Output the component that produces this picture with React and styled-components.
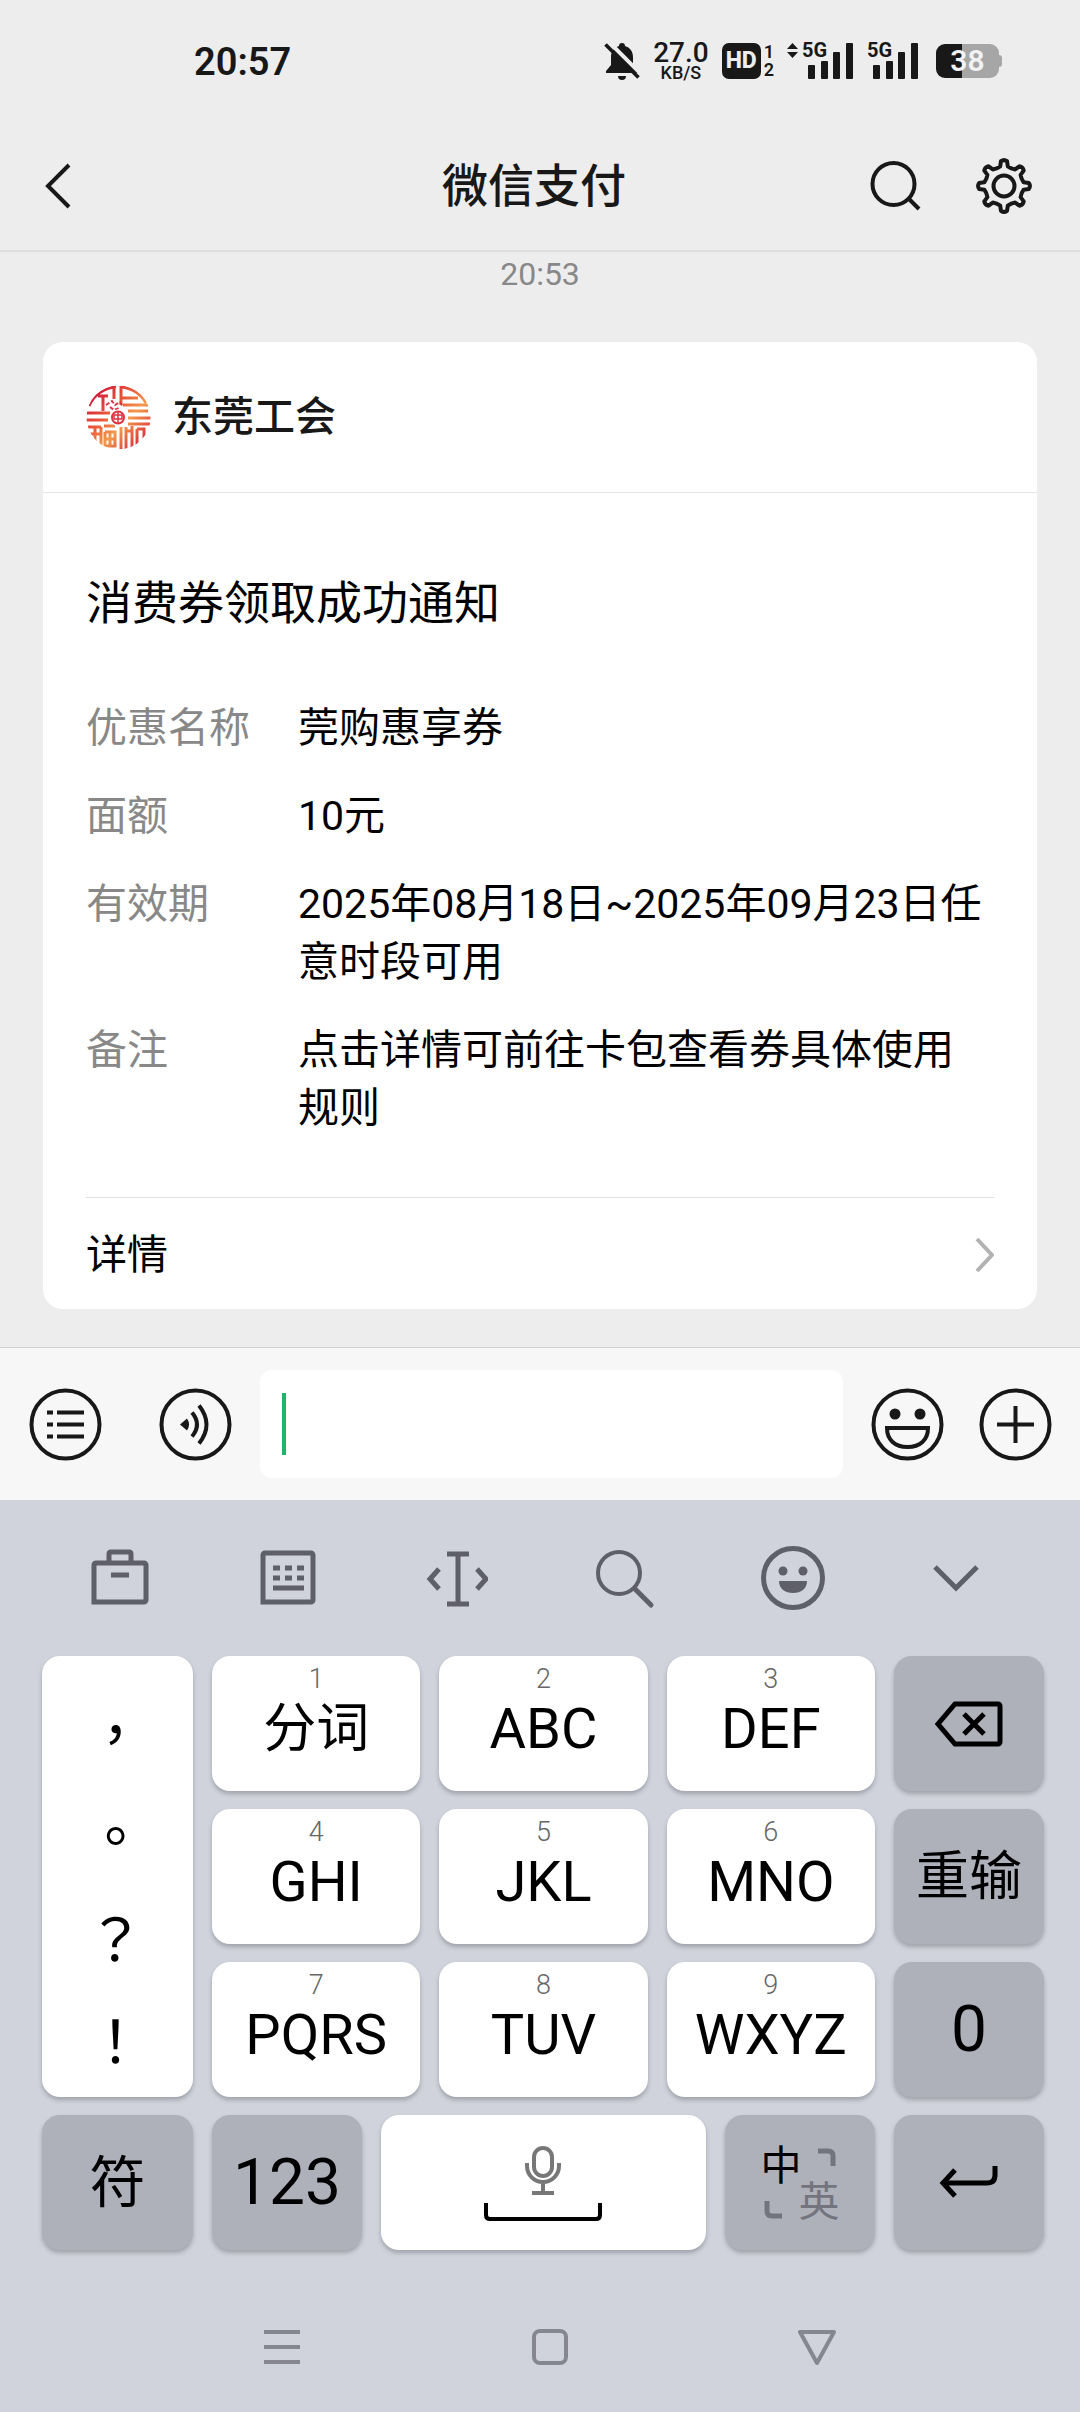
import React from "react";
import styled, { createGlobalStyle } from "styled-components";

const GlobalStyle = createGlobalStyle`
  *, *::before, *::after { box-sizing: border-box; }
  body {
    margin: 0;
    background: #d0d3db;
    color: #000;
    font-family: Roboto, "Noto Sans CJK SC", sans-serif;
  }
  button, input { font: inherit; color: inherit; }
  svg { display: block; flex: none; }
`;

const Page = styled.div`
  display: flex;
  flex-direction: column;
`;

const PlainButton = styled.button`
  display: flex;
  align-items: center;
  justify-content: center;
  padding: 0;
  border: 0;
  background: none;
`;

/* ---------- status bar ---------- */

const StatusBar = styled.div`
  display: flex;
  align-items: center;
  justify-content: space-between;
  height: 122px;
  padding: 0 78px 0 194px;
  background: #ededed;
  color: #181818;
`;

const Clock = styled.time`
  padding-top: 2px;
  font-size: 38px;
  font-weight: 600;
  line-height: 40px;
`;

const StatusIcons = styled.div`
  display: flex;
  align-items: center;
  gap: 13px;
`;

const NetSpeed = styled.div`
  display: flex;
  flex-direction: column;
  align-items: center;
  font-weight: 500;
  font-size: 28px;
  line-height: 24px;
`;

const SpeedUnit = styled.span`
  font-size: 18px;
  line-height: 16px;
`;

const HdGroup = styled.div`
  display: flex;
  align-items: center;
  gap: 3px;
`;

const HdBadge = styled.span`
  width: 39px;
  border-radius: 7px;
  background: #181818;
  color: #ededed;
  font-size: 23px;
  font-weight: 800;
  line-height: 36px;
  text-align: center;
`;

const SimNumbers = styled.span`
  display: flex;
  flex-direction: column;
  font-size: 18px;
  font-weight: 600;
  line-height: 18px;
`;

const Battery = styled.div`
  display: flex;
  align-items: center;
  margin-left: 4px;
`;

const BatteryBody = styled.span`
  width: 63px;
  border-radius: 9px;
  background: linear-gradient(90deg, #181818 42%, #a6a6a6 42%);
  color: #f2f2f2;
  font-size: 30px;
  font-weight: 600;
  line-height: 34px;
  text-align: center;
`;

const BatteryCap = styled.span`
  width: 3px;
  height: 12px;
  border-radius: 0 3px 3px 0;
  background: #a6a6a6;
`;

/* ---------- title bar ---------- */

const Header = styled.header`
  display: grid;
  grid-template-columns: 1fr auto 1fr;
  align-items: center;
  height: 130px;
  padding: 0 48px 0 36px;
  border-bottom: 2px solid #dedede;
  background: #ededed;
  color: #181818;
`;

const BackButton = styled(PlainButton)`
  justify-self: start;
`;

const HeaderTitle = styled.h1`
  margin: 0;
  font-size: 46px;
  font-weight: 500;
  line-height: 60px;
`;

const HeaderActions = styled.div`
  display: flex;
  justify-content: flex-end;
  gap: 52px;
`;

/* ---------- conversation ---------- */

const Chat = styled.main`
  display: flex;
  flex-direction: column;
  padding: 0 43px 38px;
  background: #ededed;
`;

const Stamp = styled.time`
  align-self: center;
  margin-bottom: 46px;
  color: #888;
  font-size: 32px;
  line-height: 44px;
`;

const Card = styled.article`
  border-radius: 20px;
  background: #fff;
`;

const CardHeader = styled.div`
  display: flex;
  align-items: center;
  gap: 21px;
  height: 151px;
  padding: 0 43px;
  border-bottom: 1px solid #e5e5e5;
  color: #181818;
  font-size: 41px;
  font-weight: 500;
  line-height: 58px;
`;

const CardBody = styled.div`
  padding: 80px 43px 60px;
`;

const CardTitle = styled.h2`
  margin: 0 0 66px;
  font-size: 46px;
  font-weight: 400;
  line-height: 60px;
`;

const Details = styled.dl`
  display: grid;
  grid-template-columns: 180px 1fr;
  column-gap: 32px;
  row-gap: 30px;
  margin: 0;
  font-size: 41px;
  line-height: 58px;
`;

const Term = styled.dt`
  color: #888;
`;

const Value = styled.dd`
  margin: 0;
`;

const CardLink = styled.a`
  display: flex;
  align-items: center;
  justify-content: space-between;
  height: 112px;
  margin: 0 43px;
  padding-top: 2px;
  border-top: 1px solid #e0e0e0;
  color: #000;
  font-size: 41px;
  line-height: 58px;
  text-decoration: none;
`;

/* ---------- message composer ---------- */

const Composer = styled.form`
  display: flex;
  align-items: center;
  gap: 28px;
  padding: 22px 28px 22px 29px;
  border-top: 1px solid #d2d2d2;
  background: #f7f7f7;
  color: #181818;
`;

const ComposerGroup = styled.div`
  display: flex;
  gap: ${(p) => p.$gap}px;
`;

const Field = styled.label`
  display: flex;
  flex: 1;
  align-items: center;
  min-width: 0;
  height: 108px;
  padding: 0 22px;
  border-radius: 12px;
  background: #fff;
`;

const Caret = styled.span`
  width: 4px;
  height: 62px;
  background: #1fb66b;
`;

const FieldInput = styled.input`
  flex: 1;
  min-width: 0;
  padding: 0 8px;
  border: 0;
  outline: 0;
  background: none;
  font-size: 46px;
`;

/* ---------- keyboard ---------- */

const Keyboard = styled.section`
  display: flex;
  flex-direction: column;
  background: #d0d3db;
`;

const Tools = styled.div`
  display: grid;
  grid-template-columns: repeat(6, 1fr);
  height: 156px;
  padding: 0 36px;
  color: #5e5f68;
`;

const Keys = styled.div`
  display: grid;
  grid-template-columns: 151px 1fr 1fr 1fr 150px;
  grid-auto-rows: 135px;
  gap: 18px 19px;
  padding: 0 36px 0 42px;
`;

const BottomKeys = styled.div`
  display: grid;
  grid-column: 1 / -1;
  grid-template-columns: 151px 150px 1fr 150px 150px;
  gap: 19px;
`;

const Key = styled(PlainButton)`
  flex-direction: column;
  border-radius: 18px;
  background: ${(p) => (p.$dark ? "#aeb0ba" : "#fff")};
  box-shadow: 0 3px 4px rgba(60, 62, 72, 0.32);
  font-size: ${(p) => p.$size || 56}px;
  line-height: 64px;
`;

const LetterKey = styled(Key)`
  justify-content: flex-start;
  padding-top: 7px;
  line-height: 68px;
`;

const Digit = styled.span`
  color: #666;
  font-size: 27px;
  font-weight: 300;
  line-height: 32px;
`;

const PunctuationPad = styled.div`
  display: grid;
  grid-row: span 3;
  grid-auto-rows: 1fr;
  padding: 24px 4px 8px 0;
  border-radius: 18px;
  background: #fff;
  box-shadow: 0 3px 4px rgba(60, 62, 72, 0.32);
`;

const PunctuationKey = styled(PlainButton)`
  font-family: "Noto Sans CJK TC", sans-serif;
  font-size: 58px;
  line-height: 64px;
`;

const LanguageGrid = styled.span`
  display: grid;
  grid-template-columns: 38px 38px;
  grid-template-rows: 38px 38px;
  place-items: center;
  font-size: 41px;
  line-height: 38px;
`;

const LanguageName = styled.span`
  padding-top: ${(p) => (p.$muted ? 0 : 4)}px;
  color: ${(p) => (p.$muted ? "#73747e" : "#000")};
`;

const SystemNav = styled.nav`
  display: grid;
  grid-template-columns: repeat(3, 1fr);
  height: 131px;
  margin-top: 31px;
  padding: 0 128px 0 148px;
  color: #85868f;
`;

/* ---------- drawings ---------- */

const Line = ({ w, h, sw = 4, children, ...rest }) => (
  <svg
    width={w}
    height={h}
    viewBox={`0 0 ${w} ${h}`}
    fill="none"
    stroke="currentColor"
    strokeWidth={sw}
    aria-hidden="true"
    {...rest}
  >
    {children}
  </svg>
);

const BellOff = () => (
  <svg width="36" height="38" viewBox="0 0 36 38" aria-hidden="true">
    <path
      fill="#181818"
      d="M18 1a3 3 0 0 1 3 3C26 5.500 29 9.500 29 15v8l5 6v2H2v-2l5-6v-8C7 9.500 10 5.500 15 4a3 3 0 0 1 3-3zM14 34h8a4 4 0 0 1-8 0z"
    />
    <path d="M4 -1L38 33" stroke="#ededed" strokeWidth="4" />
    <path d="M1.500 2.500L34.500 35.500" stroke="#181818" strokeWidth="3.500" />
  </svg>
);

const Signal = ({ arrows }) => (
  <svg
    width={arrows ? 67 : 52}
    height="54"
    viewBox={arrows ? "-15 -8 67 54" : "0 -8 52 54"}
    fill="#181818"
    aria-hidden="true"
  >
    {arrows && <path d="M-15 7l5.500-6L-4 7zM-15 10h11l-5.500 6z" />}
    <text x="0" y="15" fontSize="20" fontWeight="700">5G</text>
    <rect x="6" y="23" width="7" height="14" rx="1" />
    <rect x="19" y="19" width="7" height="18" rx="1" />
    <rect x="31" y="10" width="7" height="27" rx="1" />
    <rect x="44" y="1" width="7" height="36" rx="1" />
  </svg>
);

const gearPath = (() => {
  const at = (deg, r) => {
    const t = (deg * Math.PI) / 180;
    return `${(28 + r * Math.sin(t)).toFixed(2)} ${(28 - r * Math.cos(t)).toFixed(2)}`;
  };
  let d = "";
  for (let i = 0; i < 8; i += 1) {
    const a = i * 45;
    d += `${i ? "L" : "M"}${at(a - 11, 20)}L${at(a - 7, 25)}Q${at(a, 27)} ${at(a + 7, 25)}L${at(a + 11, 20)}Q${at(a + 22.5, 18.5)} ${at(a + 34, 20)}`;
  }
  return `${d}Z`;
})();

const Gear = () => (
  <Line w={56} h={56} strokeLinejoin="round">
    <path d={gearPath} />
    <circle cx="28" cy="28" r="10.500" />
  </Line>
);

const Avatar = () => (
  <svg width="65" height="65" viewBox="0 0 65 65" fill="none" aria-hidden="true">
    <defs>
      <linearGradient id="seal" gradientUnits="userSpaceOnUse" x1="6" y1="6" x2="60" y2="60">
        <stop offset="0" stopColor="#d00f3a" />
        <stop offset="0.35" stopColor="#e8573a" />
        <stop offset="0.6" stopColor="#f29a4c" />
        <stop offset="1" stopColor="#d8173a" />
      </linearGradient>
      <clipPath id="disc"><circle cx="32.500" cy="32.500" r="32" /></clipPath>
    </defs>
    <g stroke="url(#seal)" strokeWidth="3" clipPath="url(#disc)">
      <path d="M3 21A31 31 0 0 1 30 2M12 11h10M17 10V26M28 2V14" />
      <path d="M35 2A31 31 0 0 1 60 18M35 1V20M35 13H52M37 20H62M42 26H62" />
      <path d="M0 28H24M0 35H22M42 33H65M42 39H65" />
      <path d="M2 42H15M9 42V56M3 49H15M15 42V60" />
      <path d="M18 41H29M19 47H29V61H19V47M19 54H29M24 47V61" />
      <path d="M35 42V64M40 42V64M46 41V62M40 46H46M51 44V60M51 44H58V54" />
    </g>
    <g stroke="#de3442" strokeWidth="2">
      <path d="M20 20l6-4 3 4 5-3 3 5M24 22l4 3 5-2" strokeDasharray="4 2" />
      <circle cx="32" cy="32.500" r="8" fill="#fff" stroke="none" />
      <circle cx="32" cy="32.500" r="6" />
      <path d="M28 30h8v4h-8zM32 27v11" strokeWidth="1.500" />
    </g>
  </svg>
);

const Ring = ({ children }) => (
  <Line w={73} h={73}>
    <circle cx="36.500" cy="36.500" r="34" />
    {children}
  </Line>
);

/* ---------- data ---------- */

const details = [
  ["优惠名称", "莞购惠享券"],
  ["面额", "10元"],
  ["有效期", "2025年08月18日~2025年09月23日任意时段可用"],
  ["备注", "点击详情可前往卡包查看券具体使用规则"],
];

const Letter = ({ digit, label, size }) => (
  <LetterKey type="button" $size={size}>
    <Digit>{digit}</Digit>
    {label}
  </LetterKey>
);

export default function App() {
  return (
    <Page>
      <GlobalStyle />
      <StatusBar>
        <Clock>20:57</Clock>
        <StatusIcons>
          <BellOff />
          <NetSpeed>
            27.0
            <SpeedUnit>KB/S</SpeedUnit>
          </NetSpeed>
          <HdGroup>
            <HdBadge>HD</HdBadge>
            <SimNumbers>
              <span>1</span>
              <span>2</span>
            </SimNumbers>
          </HdGroup>
          <Signal arrows />
          <Signal />
          <Battery>
            <BatteryBody>38</BatteryBody>
            <BatteryCap />
          </Battery>
        </StatusIcons>
      </StatusBar>

      <Header>
        <BackButton type="button" aria-label="返回">
          <Line w={44} h={56}><path d="M33 7L12 28l21 21" /></Line>
        </BackButton>
        <HeaderTitle>微信支付</HeaderTitle>
        <HeaderActions>
          <PlainButton type="button" aria-label="搜索">
            <Line w={56} h={56}>
              <circle cx="25.500" cy="26" r="21" />
              <path d="M40 40l11 11" />
            </Line>
          </PlainButton>
          <PlainButton type="button" aria-label="设置"><Gear /></PlainButton>
        </HeaderActions>
      </Header>

      <Chat>
        <Stamp>20:53</Stamp>
        <Card>
          <CardHeader>
            <Avatar />
            东莞工会
          </CardHeader>
          <CardBody>
            <CardTitle>消费券领取成功通知</CardTitle>
            <Details>
              {details.map(([term, value]) => (
                <React.Fragment key={term}>
                  <Term>{term}</Term>
                  <Value>{value}</Value>
                </React.Fragment>
              ))}
            </Details>
          </CardBody>
          <CardLink href="#detail">
            详情
            <Line w={19} h={36} color="#b2b2b2"><path d="M2 2l15 16L2 34" /></Line>
          </CardLink>
        </Card>
      </Chat>

      <Composer>
        <ComposerGroup $gap={57}>
          <PlainButton type="button" aria-label="菜单">
            <Ring>
              <path d="M18 24.500h6M28 24.500h27M18 36.500h6M28 36.500h27M18 48.500h6M28 48.500h27" />
            </Ring>
          </PlainButton>
          <PlainButton type="button" aria-label="语音">
            <Ring>
              <path d="M21 36.500l7-6q4 6 0 12z" fill="currentColor" stroke="none" />
              <path d="M33 24.500q10 12 0 24M40 17.500q15 19 0 38" />
            </Ring>
          </PlainButton>
        </ComposerGroup>
        <Field>
          <Caret />
          <FieldInput type="text" aria-label="消息" />
        </Field>
        <ComposerGroup $gap={35}>
          <PlainButton type="button" aria-label="表情">
            <Ring>
              <circle cx="24" cy="26" r="5.500" fill="currentColor" stroke="none" />
              <circle cx="49" cy="26" r="5.500" fill="currentColor" stroke="none" />
              <path d="M16 40h41c0 12-8 19-20.500 19S16 52 16 40z" />
            </Ring>
          </PlainButton>
          <PlainButton type="button" aria-label="更多">
            <Ring><path d="M18 36.500h37M36.500 18v37" /></Ring>
          </PlainButton>
        </ComposerGroup>
      </Composer>

      <Keyboard>
        <Tools>
          <PlainButton type="button" aria-label="工具箱">
            <Line w={60} h={64} sw={5}>
              <path d="M4 56V19a2 2 0 0 1 2-2h48a2 2 0 0 1 2 2v35a2 2 0 0 1-2 2zM19 17V8q0-2 2-2h18q2 0 2 2v9M21 29h18" />
            </Line>
          </PlainButton>
          <PlainButton type="button" aria-label="键盘">
            <Line w={60} h={64} sw={5}>
              <path d="M5 56V9a2 2 0 0 1 2-2h46a2 2 0 0 1 2 2v45a2 2 0 0 1-2 2z" />
              <path d="M15 22h7M27 22h7M39 22h7M15 32h7M27 32h7M39 32h7M15 42h31" />
            </Line>
          </PlainButton>
          <PlainButton type="button" aria-label="光标">
            <Line w={64} h={64} sw={5}>
              <path d="M23 8h22M23 58h22M34 8v50M15 23L6 33l9 10M53 23l9 10-9 10" />
            </Line>
          </PlainButton>
          <PlainButton type="button" aria-label="搜索">
            <Line w={64} h={64} strokeLinecap="round">
              <circle cx="27" cy="27" r="21" />
              <path d="M43 43l16 16" strokeWidth="5" />
            </Line>
          </PlainButton>
          <PlainButton type="button" aria-label="表情">
            <Line w={66} h={66} sw={5}>
              <circle cx="34" cy="33" r="29.500" />
              <circle cx="24" cy="26" r="4.500" fill="currentColor" stroke="none" />
              <circle cx="44" cy="26" r="4.500" fill="currentColor" stroke="none" />
              <path d="M20 36h28c0 8-6 12-14 12s-14-4-14-12z" fill="currentColor" stroke="none" />
            </Line>
          </PlainButton>
          <PlainButton type="button" aria-label="收起">
            <Line w={54} h={32} sw={5}><path d="M2 5l21 21L44 5" /></Line>
          </PlainButton>
        </Tools>

        <Keys>
          <PunctuationPad>
            {["，", "。", "？", "！"].map((mark) => (
              <PunctuationKey key={mark} type="button">{mark}</PunctuationKey>
            ))}
          </PunctuationPad>
          <Letter digit="1" label="分词" size={53} />
          <Letter digit="2" label="ABC" />
          <Letter digit="3" label="DEF" />
          <Key type="button" $dark aria-label="删除">
            <Line w={70} h={48} sw={5}>
              <path d="M21 4h43a2 2 0 0 1 2 2v36a2 2 0 0 1-2 2H21L4 24z" />
              <path d="M30 14l20 20M50 14L30 34" />
            </Line>
          </Key>
          <Letter digit="4" label="GHI" />
          <Letter digit="5" label="JKL" />
          <Letter digit="6" label="MNO" />
          <Key type="button" $dark $size={53}>重输</Key>
          <Letter digit="7" label="PQRS" />
          <Letter digit="8" label="TUV" />
          <Letter digit="9" label="WXYZ" />
          <Key type="button" $dark $size={64}>0</Key>
          <BottomKeys>
            <Key type="button" $dark>符</Key>
            <Key type="button" $dark $size={64}>123</Key>
            <Key type="button" aria-label="空格">
              <Line w={120} h={76}>
                <rect x="51" y="3" width="18" height="28" rx="9" stroke="#777" />
                <path d="M44 18v3a16 16 0 0 0 32 0v-3M60 37v10M49 48h22" stroke="#777" />
                <path d="M3 58v12q0 4 4 4h106q4 0 4-4V58" />
              </Line>
            </Key>
            <Key type="button" $dark>
              <LanguageGrid>
                <LanguageName>中</LanguageName>
                <Line w={38} h={38} sw={5} color="#73747e"><path d="M18 6h10q5 0 5 5v10" /></Line>
                <Line w={38} h={38} sw={5} color="#73747e"><path d="M5 18v10q0 5 5 5h10" /></Line>
                <LanguageName $muted>英</LanguageName>
              </LanguageGrid>
            </Key>
            <Key type="button" $dark aria-label="回车">
              <Line w={60} h={36} sw={5}>
                <path d="M16 5L4 18l12 13M4 18h44q8 0 8-8V1" />
              </Line>
            </Key>
          </BottomKeys>
        </Keys>

        <SystemNav>
          <PlainButton type="button" aria-label="最近任务">
            <Line w={36} h={36}><path d="M0 3h36M0 18h36M0 33h36" /></Line>
          </PlainButton>
          <PlainButton type="button" aria-label="主页">
            <Line w={36} h={36}><rect x="2" y="2" width="32" height="32" rx="6" /></Line>
          </PlainButton>
          <PlainButton type="button" aria-label="后退">
            <Line w={40} h={38} strokeLinejoin="round"><path d="M2 4h34L19 35z" /></Line>
          </PlainButton>
        </SystemNav>
      </Keyboard>
    </Page>
  );
}
